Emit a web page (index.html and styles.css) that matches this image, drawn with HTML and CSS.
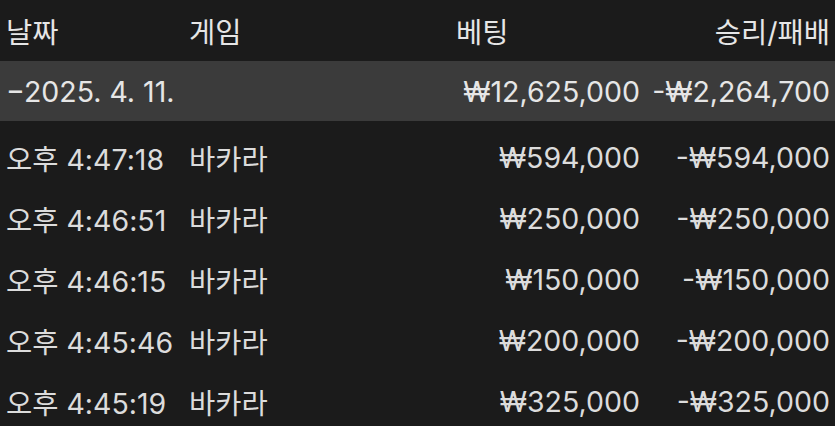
FILE: index.html
```html
<!DOCTYPE html>
<html lang="ko">
<head>
<meta charset="utf-8">
<link rel="stylesheet" href="styles.css">
</head>
<body>
<div class="table">
  <div class="row head">
    <div class="c date">날짜</div>
    <div class="c game">게임</div>
    <div class="c bet left">베팅</div>
    <div class="c res">승리/패배</div>
  </div>
  <div class="row sum">
    <div class="c date">−2025. 4. 11.</div>
    <div class="c game"></div>
    <div class="c bet">₩12,625,000</div>
    <div class="c res">-₩2,264,700</div>
  </div>
  <div class="body">
    <div class="row item">
      <div class="c date">오후 4:47:18</div>
      <div class="c game">바카라</div>
      <div class="c bet">₩594,000</div>
      <div class="c res">-₩594,000</div>
    </div>
    <div class="row item">
      <div class="c date">오후 4:46:51</div>
      <div class="c game">바카라</div>
      <div class="c bet">₩250,000</div>
      <div class="c res">-₩250,000</div>
    </div>
    <div class="row item">
      <div class="c date">오후 4:46:15</div>
      <div class="c game">바카라</div>
      <div class="c bet">₩150,000</div>
      <div class="c res">-₩150,000</div>
    </div>
    <div class="row item">
      <div class="c date">오후 4:45:46</div>
      <div class="c game">바카라</div>
      <div class="c bet">₩200,000</div>
      <div class="c res">-₩200,000</div>
    </div>
    <div class="row item">
      <div class="c date">오후 4:45:19</div>
      <div class="c game">바카라</div>
      <div class="c bet">₩325,000</div>
      <div class="c res">-₩325,000</div>
    </div>
  </div>
</div>
</body>
</html>
```

FILE: styles.css
```css
html, body {
  margin: 0;
  padding: 0;
  background: #1b1b1b;
}
body {
  width: 835px;
  height: 426px;
  overflow: hidden;
  font-family: Inter, "Noto Sans CJK KR", sans-serif;
  font-size: 28.5px;
  color: #e6e6e6;
}
.row {
  display: grid;
  grid-template-columns: 183px 264px 187px 1fr;
  align-items: center;
  padding: 0 5px 0 6px;
}
.head {
  height: 61px;
}
.sum {
  height: 60px;
  background: #3b3b3b;
}
.body {
  padding-top: 6px;
}
.item {
  height: 61px;
  color: #dcdcdc;
}
.bet, .res {
  text-align: right;
  white-space: nowrap;
}
.bet.left {
  text-align: left;
  padding-left: 3px;
}
```
